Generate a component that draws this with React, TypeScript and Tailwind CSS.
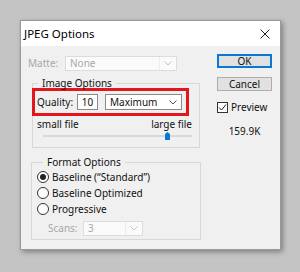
import React from 'react';

const font = { fontFamily: '"Noto Sans", "Open Sans", sans-serif' };

function Chevron({ light }: { light?: boolean }) {
  return (
    <svg width="8" height="5" viewBox="0 0 8 5" className="shrink-0">
      <path d="M0.5 0.5 L4 4 L7.5 0.5" fill="none" stroke={light ? '#c4c4c4' : '#555'} strokeWidth="1" />
    </svg>
  );
}

function Radio({ checked, label }: { checked?: boolean; label: string }) {
  return (
    <div className="flex items-center h-[16px]">
      <span className="w-[12px] h-[12px] rounded-full border border-[#333] bg-white flex items-center justify-center">
        {checked && <span className="w-[6px] h-[6px] rounded-full bg-[#222]" />}
      </span>
      <span className="ml-[3px] text-[10px] leading-[12px] text-[#111]">{label}</span>
    </div>
  );
}

export default function App() {
  return (
    <div className="w-[300px] h-[272px] bg-[#c4c4c4] pt-[20px] pl-[20px]" style={font}>
      <div className="w-[261px] h-[230px] bg-[#f0f0f0] border border-[#999] shadow-[2px_2px_5px_rgba(0,0,0,0.35)] flex flex-col">
        {/* title bar */}
        <div className="h-[25px] bg-white flex items-center justify-between pl-[3px] pr-[10px]">
          <span className="text-[11.5px] leading-[14px] text-black">JPEG Options</span>
          <svg width="10" height="10" viewBox="0 0 10 10">
            <path d="M0.5 0.5 L9.5 9.5 M9.5 0.5 L0.5 9.5" stroke="#222" strokeWidth="1" />
          </svg>
        </div>

        <div className="flex flex-1">
          {/* left column */}
          <div className="pl-[7px] pt-[10px] flex flex-col">
            <div className="flex items-center h-[15px]">
              <span className="w-[37px] text-[10px] text-[#a8a8a8]">Matte:</span>
              <div className="w-[112px] h-[15px] bg-[#fafafa] border border-[#dcdcdc] flex items-center">
                <span className="flex-1 pl-[4px] text-[10px] text-[#a8a8a8]">None</span>
                <span className="w-px h-[13px] bg-[#ececec]" />
                <span className="w-[16px] flex justify-center"><Chevron light /></span>
              </div>
            </div>

            {/* image options */}
            <fieldset className="mt-[7px] ml-[4px] w-[168px] border border-[#d7d7d7] pb-[6px]">
              <legend className="ml-[5px] px-[4px] text-[10px] leading-[10px] text-[#111]">Image Options</legend>
              <div className="-ml-[1px] w-[157px] h-[28px] border-[3px] border-[#e3161e] flex items-center pl-[2px]">
                <span className="w-[40px] text-[10px] text-[#111]">Quality:</span>
                <div className="w-[21px] h-[16px] bg-white border border-[#8a8a8a] flex items-center justify-center text-[10px] text-[#111]">10</div>
                <div className="ml-[7px] w-[77px] h-[16px] bg-white border border-[#8a8a8a] flex items-center">
                  <span className="flex-1 pl-[4px] text-[10px] text-[#111]">Maximum</span>
                  <span className="w-[16px] flex justify-center"><Chevron /></span>
                </div>
              </div>
              <div className="mt-[2px] flex justify-between pl-[4px] pr-[7px] text-[10px] leading-[12px] text-[#111]">
                <span>small file</span>
                <span>large file</span>
              </div>
              <div className="mt-[1px] h-[10px] ml-[10px] mr-[7px] relative flex items-center">
                <div className="w-full h-[2px] bg-[#d8d8d8]" />
                <svg width="5" height="8" viewBox="0 0 5 8" className="absolute left-[122px] top-[1px]">
                  <path d="M0 2 L2.5 0 L5 2 L5 8 L0 8 Z" fill="#0a78d7" />
                </svg>
              </div>
            </fieldset>

            {/* format options */}
            <fieldset className="mt-[9px] ml-[3px] w-[170px] border border-[#d7d7d7] pt-[2px] pb-[3px] pl-[5px]">
              <legend className="ml-[6px] px-[4px] text-[10px] leading-[10px] text-[#111]">Format Options</legend>
              <Radio checked label={'Baseline (\u201cStandard\u201d)'} />
              <Radio label="Baseline Optimized" />
              <Radio label="Progressive" />
              <div className="mt-[4px] pl-[11px] flex items-center h-[15px]">
                <span className="w-[35px] text-[10px] text-[#a8a8a8]">Scans:</span>
                <div className="w-[60px] h-[15px] bg-[#fafafa] border border-[#dcdcdc] flex items-center">
                  <span className="flex-1 pl-[4px] text-[10px] text-[#a8a8a8]">3</span>
                  <span className="w-px h-[13px] bg-[#ececec]" />
                  <span className="w-[16px] flex justify-center"><Chevron light /></span>
                </div>
              </div>
            </fieldset>
          </div>

          {/* right column */}
          <div className="ml-auto pr-[8px] pt-[8px] flex flex-col w-[63px]">
            <button className="w-[55px] h-[14px] bg-[#e1e1e1] border-2 border-[#0a78d7] text-[10px] leading-[10px] text-[#111] flex items-center justify-center">OK</button>
            <button className="mt-[9px] w-[55px] h-[14px] bg-[#e1e1e1] border border-[#adadad] text-[10px] leading-[10px] text-[#111] flex items-center justify-center">Cancel</button>
            <div className="mt-[10px] flex items-center h-[12px]">
              <span className="w-[11px] h-[11px] border border-[#333] bg-white flex items-center justify-center">
                <svg width="9" height="9" viewBox="0 0 9 9">
                  <path d="M1 4.5 L3.5 7 L8 1.5" fill="none" stroke="#222" strokeWidth="1" />
                </svg>
              </span>
              <span className="ml-[3px] text-[10px] leading-[12px] text-[#111]">Preview</span>
            </div>
            <div className="mt-[12px] w-[55px] text-center text-[10px] leading-[12px] text-[#111]">159.9K</div>
          </div>
        </div>
      </div>
    </div>
  );
}
